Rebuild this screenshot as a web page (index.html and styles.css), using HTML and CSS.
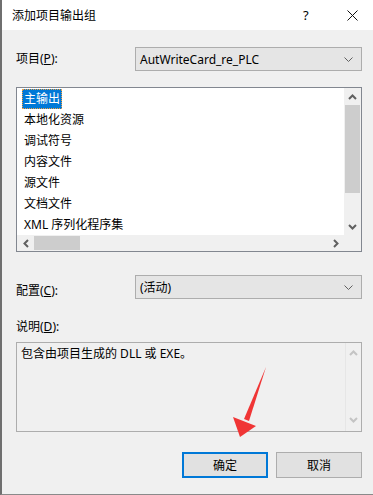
FILE: index.html
```html
<!DOCTYPE html>
<html lang="zh-CN">
<head>
  <meta charset="UTF-8" />
  <title>添加项目输出组</title>
  <link rel="stylesheet" href="styles.css">
</head>
<body>
<div class="dialog">
  <header class="titlebar">
    <span class="title">添加项目输出组</span>
    <span class="help">?</span>
    <span class="close">
      <svg width="11" height="11" viewBox="0 0 11 11"><path d="M0.5 0.5L10.5 10.5M10.5 0.5L0.5 10.5" stroke="#111" stroke-width="1"/></svg>
    </span>
  </header>

  <main class="content">
    <div class="row">
      <label class="label">项目(<u>P</u>):</label>
      <div class="combo">
        <span>AutWriteCard_re_PLC</span>
        <svg class="chev" width="9" height="5" viewBox="0 0 9 5"><path d="M0.5 0.5L4.5 4.5L8.5 0.5" fill="none" stroke="#606060"/></svg>
      </div>
    </div>

    <div class="listbox">
      <div class="listarea">
        <ul class="items">
          <li><span class="selected">主输出</span></li>
          <li>本地化资源</li>
          <li>调试符号</li>
          <li>内容文件</li>
          <li>源文件</li>
          <li>文档文件</li>
          <li>XML 序列化程序集</li>
        </ul>
        <div class="vscroll">
          <div class="sbtn"><svg width="9" height="6" viewBox="0 0 9 6"><path d="M1 5L4.5 1.5L8 5" fill="none" stroke="#606060" stroke-width="2"/></svg></div>
          <div class="vtrack"><div class="vthumb"></div></div>
          <div class="sbtn"><svg width="9" height="6" viewBox="0 0 9 6"><path d="M1 1L4.5 4.5L8 1" fill="none" stroke="#606060" stroke-width="2"/></svg></div>
        </div>
      </div>
      <div class="hscroll">
        <div class="hbtn"><svg width="6" height="9" viewBox="0 0 6 9"><path d="M5 1L1.5 4.5L5 8" fill="none" stroke="#606060" stroke-width="2"/></svg></div>
        <div class="htrack"><div class="hthumb"></div></div>
        <div class="hbtn"><svg width="6" height="9" viewBox="0 0 6 9"><path d="M1 1L4.5 4.5L1 8" fill="none" stroke="#606060" stroke-width="2"/></svg></div>
        <div class="corner"></div>
      </div>
    </div>

    <div class="row config">
      <label class="label">配置(<u>C</u>):</label>
      <div class="combo">
        <span>(活动)</span>
        <svg class="chev" width="9" height="5" viewBox="0 0 9 5"><path d="M0.5 0.5L4.5 4.5L8.5 0.5" fill="none" stroke="#606060"/></svg>
      </div>
    </div>

    <label class="label desc-label">说明(<u>D</u>):</label>
    <div class="descbox">
      <p class="desc">包含由项目生成的 DLL 或 EXE。</p>
      <div class="dscroll">
        <svg width="9" height="6" viewBox="0 0 9 6"><path d="M1 5L4.5 1.5L8 5" fill="none" stroke="#c4c4c4" stroke-width="2"/></svg>
        <svg width="9" height="6" viewBox="0 0 9 6"><path d="M1 1L4.5 4.5L8 1" fill="none" stroke="#c4c4c4" stroke-width="2"/></svg>
      </div>
    </div>

    <div class="buttons">
      <button class="btn default">确定</button>
      <button class="btn">取消</button>
    </div>
  </main>

  <svg class="pointer" width="373" height="495" viewBox="0 0 373 495">
    <polygon points="266,367 249,421 244,419" fill="#f03535"/>
    <polygon points="233,417 256,426 240,437" fill="#f03535"/>
  </svg>
</div>
</body>
</html>
```

FILE: styles.css
```css
* {
  box-sizing: border-box;
}

body {
  margin: 0;
  font-family: "Noto Sans", "Noto Sans CJK SC", sans-serif;
  font-size: 12px;
  color: #000;
  background: #f0f0f0;
}

.dialog {
  position: relative;
  width: 373px;
  height: 495px;
  border-left: 2px solid #6f6f6f;
  border-bottom: 1px solid #8a8a8a;
  background: #f0f0f0;
  overflow: hidden;
}

.titlebar {
  display: flex;
  align-items: center;
  height: 30px;
  background: #fff;
  padding-left: 10px;
}
.title {
  flex: 1;
  font-size: 12px;
}
.help {
  width: 44px;
  font-size: 13px;
  text-align: left;
}
.close {
  width: 26px;
  display: flex;
  align-items: center;
}

.content {
  padding: 17px 11px 0 14px;
}

.row {
  display: flex;
  align-items: center;
  height: 24px;
}
.label {
  display: block;
  width: 119px;
  line-height: 16px;
}
.combo {
  flex: 1;
  display: flex;
  align-items: center;
  justify-content: space-between;
  height: 24px;
  padding: 0 8px 0 4px;
  background: #e5e5e5;
  border: 1px solid #adadad;
}
.chev {
  margin-top: 1px;
}

.listbox {
  margin-top: 16px;
  height: 165px;
  border: 1px solid #828790;
  background: #fff;
  display: flex;
  flex-direction: column;
}
.listarea {
  flex: 1;
  display: flex;
}
.items {
  flex: 1;
  list-style: none;
  margin: 0;
  padding: 0 0 0 5px;
  line-height: 21px;
}
.items li {
  height: 21px;
  padding-left: 2px;
}
.selected {
  display: inline-block;
  height: 20px;
  line-height: 19px;
  margin-left: -2px;
  padding: 0 2px;
  background: #0078d7;
  color: #fff;
  outline: 1px dotted #f0a040;
  outline-offset: -1px;
}

.vscroll {
  width: 17px;
  display: flex;
  flex-direction: column;
  background: #f0f0f0;
}
.sbtn {
  height: 17px;
  display: flex;
  align-items: center;
  justify-content: center;
}
.vtrack {
  flex: 1;
}
.vthumb {
  height: 88px;
  background: #cdcdcd;
  margin: 0 1px;
}

.hscroll {
  height: 16px;
  display: flex;
  background: #f0f0f0;
}
.hbtn {
  width: 17px;
  display: flex;
  align-items: center;
  justify-content: center;
}
.htrack {
  flex: 1;
  padding: 1px 0;
}
.hthumb {
  width: 46px;
  height: 100%;
  background: #cdcdcd;
}
.corner {
  width: 17px;
}

.config {
  margin-top: 23px;
}
.config .label {
  padding-top: 8px;
}

.desc-label {
  margin-top: 20px;
  width: auto;
}
.descbox {
  margin-top: 7px;
  height: 90px;
  display: flex;
  border: 1px solid #adadad;
  background: #f0f0f0;
}
.desc {
  flex: 1;
  margin: 0;
  padding: 3px 4px;
  line-height: 16px;
}
.dscroll {
  width: 16px;
  display: flex;
  flex-direction: column;
  justify-content: space-between;
  align-items: center;
  padding: 7px 0 8px;
  border-left: 1px solid #e6e6e6;
}

.buttons {
  display: flex;
  justify-content: flex-end;
  gap: 8px;
  margin-top: 20px;
}
.btn {
  width: 86px;
  height: 26px;
  font: inherit;
  color: #000;
  background: #e1e1e1;
  border: 1px solid #adadad;
  padding: 0;
}
.btn.default {
  border: 2px solid #0078d7;
}

.pointer {
  position: absolute;
  left: -2px;
  top: 0;
  pointer-events: none;
}
```
